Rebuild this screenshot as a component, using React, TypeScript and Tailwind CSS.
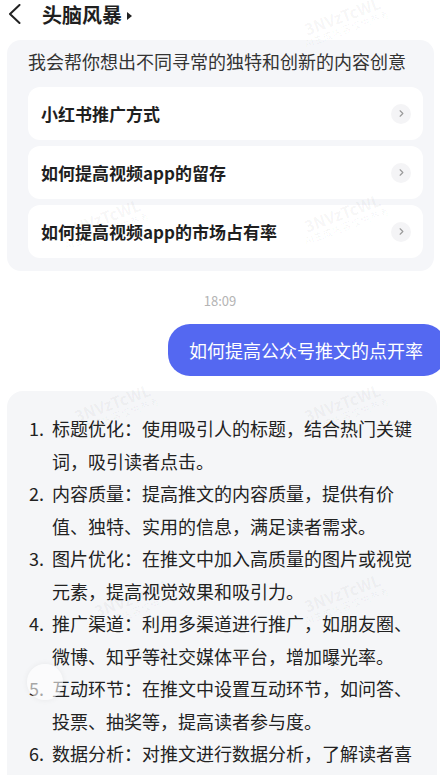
import { ChevronRight } from "lucide-react";

const suggestions = ["小红书推广方式", "如何提高视频app的留存", "如何提高视频app的市场占有率"];

const answer = [
  "标题优化：使用吸引人的标题，结合热门关键词，吸引读者点击。",
  "内容质量：提高推文的内容质量，提供有价值、独特、实用的信息，满足读者需求。",
  "图片优化：在推文中加入高质量的图片或视觉元素，提高视觉效果和吸引力。",
  "推广渠道：利用多渠道进行推广，如朋友圈、微博、知乎等社交媒体平台，增加曝光率。",
  "互动环节：在推文中设置互动环节，如问答、投票、抽奖等，提高读者参与度。",
  "数据分析：对推文进行数据分析，了解读者喜好，优化推文内容。",
];

// faint watermark stamps spread over the page
const marks = [
  { top: 8, left: 300 },
  { top: 210, left: 60 },
  { top: 205, left: 300 },
  { top: 395, left: 70 },
  { top: 395, left: 300 },
  { top: 590, left: 90 },
  { top: 585, left: 300 },
];

export default function App() {
  return (
    <div className="relative h-[775px] w-[440px] overflow-hidden bg-white font-['Noto_Sans_CJK_SC','Noto_Sans',sans-serif] text-[#1f1f1f]">
      {/* Header */}
      <div className="flex h-[30px] items-center pl-[8px]">
        <svg width="13" height="20" viewBox="0 0 13 20" className="mb-[2px]">
          <path d="M11.5 1 L2 10 L11.5 19" fill="none" stroke="#222" strokeWidth="2" strokeLinecap="round" strokeLinejoin="round" />
        </svg>
        <span className="ml-[21px] text-[20px] font-bold leading-[28px]">头脑风暴</span>
        <svg width="6" height="8" viewBox="0 0 6 8" className="ml-[5px] mt-[1px]">
          <path d="M0 0 L5 4 L0 8 Z" fill="#222" />
        </svg>
      </div>

      {/* Intro card */}
      <div className="ml-[7px] mr-[6px] mt-[10px] rounded-[14px] bg-[#f5f6f9] pb-[13px] pl-[21px] pr-[11px] pt-[8px]">
        <p className="text-[18px] leading-[26px] text-[#333]">我会帮你想出不同寻常的独特和创新的内容创意</p>
        <div className="mt-[13px] flex flex-col gap-[6px]">
          {suggestions.map((s) => (
            <div key={s} className="flex h-[53px] items-center justify-between rounded-[12px] bg-white pl-[13px] pr-[12px]">
              <span className="text-[17px] font-semibold">{s}</span>
              <span className="flex h-[20px] w-[20px] items-center justify-center rounded-full bg-[#f4f4f6]">
                <ChevronRight className="h-[11px] w-[11px] text-[#9a9a9a]" strokeWidth={2.5} />
              </span>
            </div>
          ))}
        </div>
      </div>

      {/* Time */}
      <div className="mt-[21px] text-center text-[13px] leading-[18px] text-[#b4b4b4]">18:09</div>

      {/* User message */}
      <div className="mt-[14px] flex justify-end">
        <div className="-mr-[6px] flex h-[52px] w-[278px] items-center rounded-[22px] bg-[#5468f1] pl-[21px] text-[18px] text-white">
          如何提高公众号推文的点开率
        </div>
      </div>

      {/* Answer */}
      <div className="ml-[7px] mr-[3px] mt-[15px] rounded-[16px] bg-[#f5f6f8] pb-[20px] pl-[22px] pr-[16px] pt-[21px]">
        <ol className="flex flex-col">
          {answer.map((a, i) => (
            <li key={i} className="flex text-[18px] leading-[32.5px] text-[#222]">
              <span className="w-[23px] shrink-0">{i + 1}.</span>
              <span>{a}</span>
            </li>
          ))}
        </ol>
      </div>

      {/* Watermarks */}
      {marks.map((m, i) => (
        <div
          key={i}
          className="pointer-events-none absolute -rotate-[20deg] text-center leading-[14px] text-black/[0.045]"
          style={{ top: m.top, left: m.left }}
        >
          <div className="text-[16px] font-semibold">3NVzTcWL</div>
          <div className="text-[10px]">AI生成内容仅供参考</div>
        </div>
      ))}

      {/* Floating ball */}
      <div className="absolute left-[27px] top-[664px] h-[36px] w-[36px] rounded-full bg-white/60 shadow-[0_0_6px_rgba(0,0,0,0.06)]" />
    </div>
  );
}
